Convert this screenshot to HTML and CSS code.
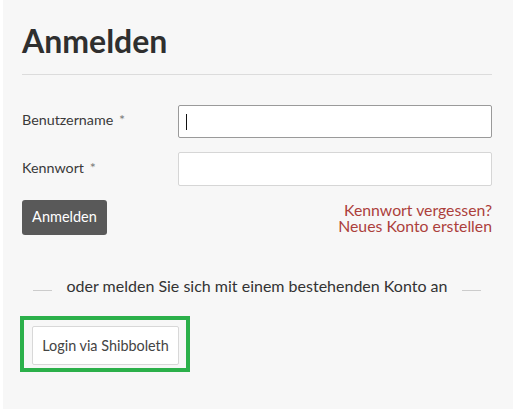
FILE: index.html
```html
<!DOCTYPE html>
<html lang="de">
<head>
<meta charset="utf-8">
<title>Anmelden</title>
<link rel="stylesheet" href="styles.css">
</head>
<body>
<div class="panel">
  <h1 class="title">Anmelden</h1>
  <form class="form">
    <div class="row">
      <label class="label" for="u">Benutzername <span class="req">*</span></label>
      <div class="field focused"><span class="caret"></span></div>
    </div>
    <div class="row">
      <label class="label" for="p">Kennwort <span class="req">*</span></label>
      <div class="field"></div>
    </div>
    <div class="actions">
      <button type="button" class="btn-primary">Anmelden</button>
      <div class="links">
        <a class="link" href="#">Kennwort vergessen?</a>
        <a class="link" href="#">Neues Konto erstellen</a>
      </div>
    </div>
  </form>
  <div class="divider">
    <span class="dash"></span>
    <span class="divider-text">oder melden Sie sich mit einem bestehenden Konto an</span>
    <span class="dash"></span>
  </div>
  <div class="highlight">
    <button type="button" class="btn-sso">Login via Shibboleth</button>
  </div>
</div>
</body>
</html>
```
FILE: styles.css
```css
* { box-sizing: border-box; }
html, body { margin: 0; background: #ffffff; }
body { font-family: Lato, "Open Sans", sans-serif; color: #333333; }

.panel {
  width: 510px;
  height: 409px;
  margin-left: 3px;
  background: #f7f7f7;
  padding: 0 21px 0 19px;
  display: flex;
  flex-direction: column;
}

.title {
  margin: 23px 0 0 0;
  font-size: 32px;
  font-weight: 700;
  line-height: 36px;
  color: #2f2f2f;
  padding: 0 0 15px 0;
  border-bottom: 1px solid #dcdcdc;
}

.form {
  margin-top: 30px;
  display: flex;
  flex-direction: column;
  gap: 14px;
}

.row {
  display: grid;
  grid-template-columns: 156px 1fr;
  align-items: center;
}

.label {
  font-size: 14.3px;
  color: #3a3a3a;
  position: relative;
  top: -2px;
}
.req { color: #777; margin-left: 2px; }

.field {
  height: 34px;
  background: #ffffff;
  border: 1px solid #d6d6d6;
  border-radius: 2px;
  display: flex;
  align-items: center;
  padding-left: 7px;
}
.field.focused { height: 33px; border-color: #9a9a9a; }
.caret { width: 1px; height: 16px; background: #111; }

.actions {
  display: flex;
  justify-content: space-between;
  align-items: flex-start;
}

.btn-primary {
  font-family: Lato, sans-serif;
  font-size: 14.5px;
  color: #ffffff;
  background: #595959;
  border: none;
  border-radius: 3px;
  width: 85px;
  height: 35px;
  padding: 0;
  line-height: 1;
  cursor: pointer;
}

.links {
  display: flex;
  flex-direction: column;
  align-items: flex-end;
  padding-top: 2px;
}
.link {
  font-size: 15.8px;
  line-height: 16px;
  color: #ac3f3c;
  text-decoration: none;
}

.divider {
  margin-top: 41px;
  display: flex;
  align-items: center;
  justify-content: space-between;
  padding: 0 11px 0 11px;
}
.dash {
  width: 19px;
  height: 1px;
  background: #cccccc;
  position: relative;
  top: 5px;
}
.divider-text {
  font-size: 16px;
  color: #333333;
}

.highlight {
  margin-top: 21px;
  margin-left: -2px;
  width: 170px;
  height: 56px;
  border: 4px solid #2bb04a;
  padding: 6px 0 0 8px;
}

.btn-sso {
  font-family: Lato, sans-serif;
  font-size: 14.4px;
  color: #444444;
  background: #ffffff;
  border: 1px solid #d8d8d8;
  border-radius: 2px;
  width: 147px;
  height: 39px;
  padding: 0;
  cursor: pointer;
}
```
